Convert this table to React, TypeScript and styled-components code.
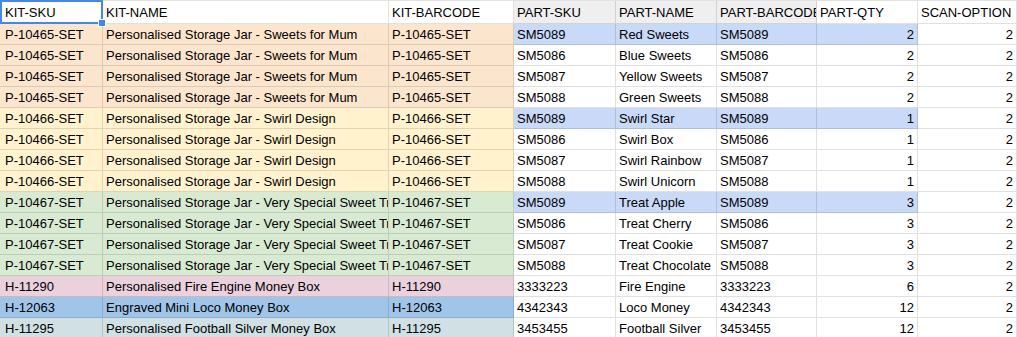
import React from "react";
import styled, { createGlobalStyle } from "styled-components";

const Global = createGlobalStyle`
  html, body { margin: 0; padding: 0; background: #fff; overflow: hidden; }
  body { font-family: "Liberation Sans", Arial, sans-serif; }
`;

const COLS = "103px 286px 125px 102px 101px 100px 101px 1fr";

const Sheet = styled.div`
  position: relative;
  display: grid;
  grid-template-columns: ${COLS};
  border-top: 1px solid #e2e2e2;
  width: 1017px;
  font-size: 13px;
  color: #000;
`;

const Cell = styled.div<{ $bg?: string; $right?: boolean; $header?: boolean; $first?: boolean }>`
  box-sizing: border-box;
  height: ${(p) => (p.$header ? 23 : 21)}px;
  padding: 2px 3px 0 ${(p) => (p.$first ? 5 : 3)}px;
  line-height: ${(p) => (p.$header ? 20 : 18)}px;
  background: ${(p) => p.$bg || "#fff"};
  border-right: 1px solid rgba(0, 0, 0, 0.12);
  border-bottom: 1px solid rgba(0, 0, 0, 0.12);
  white-space: nowrap;
  overflow: hidden;
  text-align: ${(p) => (p.$right ? "right" : "left")};
`;

const Selection = styled.div`
  position: absolute;
  left: 0;
  top: -1px;
  width: 99px;
  height: 20px;
  border: 2px solid #4285f4;
  pointer-events: none;
`;

const Handle = styled.div`
  position: absolute;
  right: -5px;
  bottom: -5px;
  width: 6px;
  height: 6px;
  background: #4285f4;
  border: 1px solid #fff;
`;

const PEACH = "#fce5cd";
const YELLOW = "#fff2cc";
const GREEN = "#d9ead3";
const PINK = "#ead1dc";
const MIDBLUE = "#9fc5e8";
const GREYBLUE = "#d0e0e3";
const SEL = "#c9daf8";
const HEAD = "#efefef";

type Row = {
  sku: string;
  name: string;
  barcode: string;
  psku: string;
  pname: string;
  pbarcode: string;
  qty: number;
  scan: number;
  kit: string;
  hl?: boolean;
};

const jar = (
  sku: string,
  name: string,
  kit: string,
  qty: number,
  parts: [string, string][]
): Row[] =>
  parts.map(([psku, pname], i) => ({
    sku,
    name,
    barcode: sku,
    psku,
    pname,
    pbarcode: psku,
    qty,
    scan: 2,
    kit,
    hl: i === 0,
  }));

const rows: Row[] = [
  ...jar("P-10465-SET", "Personalised Storage Jar - Sweets for Mum", PEACH, 2, [
    ["SM5089", "Red Sweets"],
    ["SM5086", "Blue Sweets"],
    ["SM5087", "Yellow Sweets"],
    ["SM5088", "Green Sweets"],
  ]),
  ...jar("P-10466-SET", "Personalised Storage Jar - Swirl Design", YELLOW, 1, [
    ["SM5089", "Swirl Star"],
    ["SM5086", "Swirl Box"],
    ["SM5087", "Swirl Rainbow"],
    ["SM5088", "Swirl Unicorn"],
  ]),
  ...jar(
    "P-10467-SET",
    "Personalised Storage Jar - Very Special Sweet Treats",
    GREEN,
    3,
    [
      ["SM5089", "Treat Apple"],
      ["SM5086", "Treat Cherry"],
      ["SM5087", "Treat Cookie"],
      ["SM5088", "Treat Chocolate"],
    ]
  ),
  {
    sku: "H-11290",
    name: "Personalised Fire Engine Money Box",
    barcode: "H-11290",
    psku: "3333223",
    pname: "Fire Engine",
    pbarcode: "3333223",
    qty: 6,
    scan: 2,
    kit: PINK,
  },
  {
    sku: "H-12063",
    name: "Engraved Mini Loco Money Box",
    barcode: "H-12063",
    psku: "4342343",
    pname: "Loco Money",
    pbarcode: "4342343",
    qty: 12,
    scan: 2,
    kit: MIDBLUE,
  },
  {
    sku: "H-11295",
    name: "Personalised Football Silver Money Box",
    barcode: "H-11295",
    psku: "3453455",
    pname: "Football Silver",
    pbarcode: "3453455",
    qty: 12,
    scan: 2,
    kit: GREYBLUE,
  },
];

const headers: { label: string; bg?: string }[] = [
  { label: "KIT-SKU" },
  { label: "KIT-NAME" },
  { label: "KIT-BARCODE" },
  { label: "PART-SKU", bg: HEAD },
  { label: "PART-NAME", bg: HEAD },
  { label: "PART-BARCODE", bg: HEAD },
  { label: "PART-QTY" },
  { label: "SCAN-OPTION" },
];

export default function App() {
  return (
    <>
      <Global />
      <Sheet>
        {headers.map((h, i) => (
          <Cell key={h.label} $header $bg={h.bg} $first={i === 0}>
            {h.label}
          </Cell>
        ))}
        {rows.map((r, i) => {
          const part = r.hl ? SEL : undefined;
          return (
            <React.Fragment key={i}>
              <Cell $bg={r.kit} $first>
                {r.sku}
              </Cell>
              <Cell $bg={r.kit}>{r.name}</Cell>
              <Cell $bg={r.kit}>{r.barcode}</Cell>
              <Cell $bg={part}>{r.psku}</Cell>
              <Cell $bg={part}>{r.pname}</Cell>
              <Cell $bg={part}>{r.pbarcode}</Cell>
              <Cell $bg={part} $right>
                {r.qty}
              </Cell>
              <Cell $right>{r.scan}</Cell>
            </React.Fragment>
          );
        })}
        <Selection>
          <Handle />
        </Selection>
      </Sheet>
    </>
  );
}
